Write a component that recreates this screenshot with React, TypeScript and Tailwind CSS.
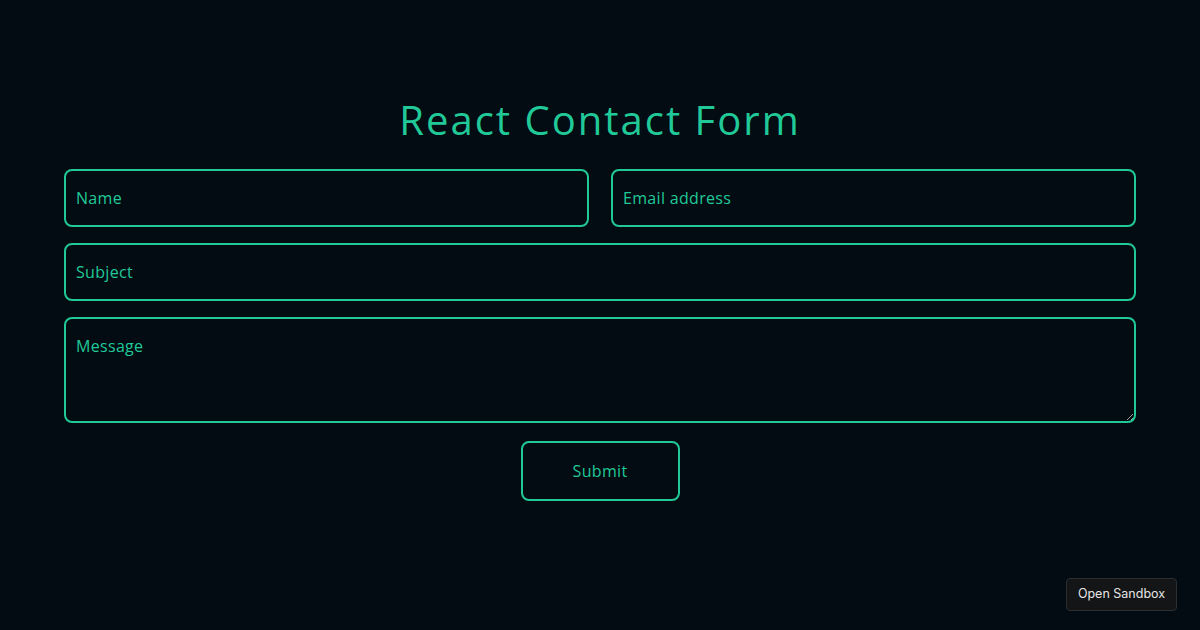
import { useState } from "react";

const fieldClass =
  "w-full rounded-lg border-2 border-[#20c997] bg-transparent px-[10px] text-base tracking-[0.02em] text-[#20c997] placeholder:text-[#20c997] outline-none";

export default function App() {
  const [form, setForm] = useState({ name: "", email: "", subject: "", message: "" });

  const update = (key: keyof typeof form) => (e: { target: { value: string } }) =>
    setForm({ ...form, [key]: e.target.value });

  return (
    <div
      className="relative h-[630px] w-full overflow-hidden bg-[#030b13]"
      style={{ fontFamily: "'Open Sans', 'Noto Sans', sans-serif" }}
    >
      <div className="mx-auto flex w-[1072px] flex-col pt-[90px]">
        <h1 className="mb-[19px] text-center text-[40px] leading-[60px] font-normal tracking-[0.05em] text-[#20c997]">
          React Contact Form
        </h1>
        <form className="flex flex-col gap-[16px]" onSubmit={(e) => e.preventDefault()}>
          <div className="flex gap-[22px]">
            <input
              className={`${fieldClass} h-[58px]`}
              placeholder="Name"
              value={form.name}
              onChange={update("name")}
            />
            <input
              className={`${fieldClass} h-[58px]`}
              placeholder="Email address"
              value={form.email}
              onChange={update("email")}
            />
          </div>
          <input
            className={`${fieldClass} h-[58px]`}
            placeholder="Subject"
            value={form.subject}
            onChange={update("subject")}
          />
          <textarea
            className={`${fieldClass} block h-[106px] py-[16px] leading-[22px]`}
            placeholder="Message"
            value={form.message}
            onChange={update("message")}
          />
          <div className="mt-[2px] flex justify-center">
            <button
              type="submit"
              className="h-[60px] w-[159px] rounded-lg border-2 border-[#20c997] bg-transparent text-base tracking-[0.02em] text-[#20c997]"
            >
              Submit
            </button>
          </div>
        </form>
      </div>
      <button
        type="button"
        className="absolute right-[23px] bottom-[19px] h-[33px] w-[111px] rounded border border-[#2b2f31] bg-[#131516] text-[12.5px] text-[#e6e6e6]"
        style={{ fontFamily: "Inter, 'Liberation Sans', sans-serif" }}
      >
        Open Sandbox
      </button>
    </div>
  );
}
